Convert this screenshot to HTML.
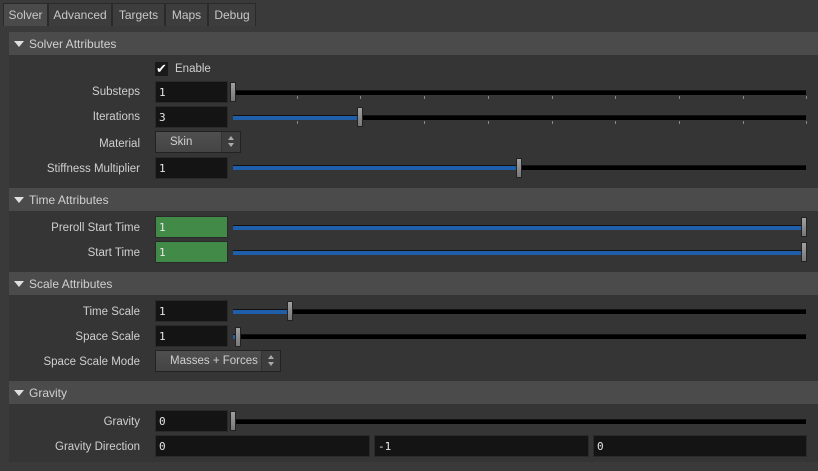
<!DOCTYPE html>
<html><head><style>
*{margin:0;padding:0;box-sizing:border-box}
body{width:818px;height:471px;background:#3a3a3a;font-family:"Liberation Sans",sans-serif;font-size:11px;color:#cfcfcf;position:relative;overflow:hidden}
.a{position:absolute}
.tab{position:absolute;top:3px;height:23px;background:#3d3d3d;border:1px solid #2a2a2a;border-bottom:none;color:#c8c8c8;font-size:12px;padding-top:4px;text-align:center}
.hdr{position:absolute;left:9px;width:809px;height:23px;background:#4b4b4b;font-size:12px;color:#d0d0d0;padding:5px 0 0 20px}
.hdr:before{content:"";position:absolute;left:5px;top:9px;border-left:5px solid transparent;border-right:5px solid transparent;border-top:6px solid #e0e0e0}
.sec{position:absolute;left:9px;width:809px;background:#353535}
.lbl{position:absolute;right:678px;font-size:11.5px;color:#cfcfcf;text-align:right;white-space:nowrap;margin-top:1px}
.fld{position:absolute;height:22px;background:#141414;border:1px solid #2a2a2a;color:#e6e6e6;font-family:"DejaVu Sans Mono","Liberation Mono",monospace;font-size:11px;padding:4px 0 0 3px}
.g{background:#428a48;border-color:#2a2a2a}
.trk{position:absolute;left:233px;width:573px;height:5px;background:#000;border-top:1px solid #111}
.fill{position:absolute;left:0;top:0;height:4px;background:#1f5ea8}
.h{position:absolute;width:6px;height:20px;background:linear-gradient(#a0a0a0,#777);border:1px solid #222}
.tk{position:absolute;width:1px;height:3px;background:#888}
.btn{position:absolute;height:22px;background:linear-gradient(#4f4f4f,#444);border:1px solid #222;color:#cfcfcf;font-size:11.5px;padding-top:4px}
.btn .s{position:absolute;right:0;top:0;width:19px;height:20px;background:#3d3d3d;border-left:1px solid #333}
</style></head><body>
<div class="tab" style="left:3px;width:45px;background:#4a4a4a">Solver</div>
<div class="tab" style="left:48px;width:64px">Advanced</div>
<div class="tab" style="left:112px;width:53px">Targets</div>
<div class="tab" style="left:165px;width:43px">Maps</div>
<div class="tab" style="left:208px;width:48px">Debug</div>

<div class="sec" style="top:32px;height:430px"></div>
<div class="hdr" style="top:32px">Solver Attributes</div>
<div class="hdr" style="top:188px">Time Attributes</div>
<div class="hdr" style="top:272px">Scale Attributes</div>
<div class="hdr" style="top:381px">Gravity</div>

<div class="a" style="left:155px;top:62px;width:13px;height:14px;background:#1a1a1a;color:#fff;font-size:13px;line-height:13px;text-align:center">✔</div>
<div class="a" style="left:175px;top:63px;font-size:11.5px">Enable</div>

<div class="lbl" style="top:85px">Substeps</div>
<div class="fld" style="left:155px;top:81px;width:73px">1</div>
<div class="trk" style="top:90px"></div>
<div class="h" style="left:230px;top:82px"></div>

<div class="lbl" style="top:110px">Iterations</div>
<div class="fld" style="left:155px;top:106px;width:73px">3</div>
<div class="trk" style="top:115px"><div class="fill" style="width:127px"></div></div>
<div class="h" style="left:357px;top:107px"></div>

<div class="lbl" style="top:137px">Material</div>
<div class="btn" style="left:155px;top:131px;width:86px;padding-left:14px">Skin<div class="s"><div class="a" style="left:6px;top:4px;border:3px solid transparent;border-bottom:4px solid #aaa;border-top:none"></div><div class="a" style="left:6px;top:11px;border:3px solid transparent;border-top:4px solid #aaa;border-bottom:none"></div></div></div>

<div class="lbl" style="top:162px">Stiffness Multiplier</div>
<div class="fld" style="left:155px;top:157px;width:73px">1</div>
<div class="trk" style="top:165px"><div class="fill" style="width:286px"></div></div>
<div class="h" style="left:516px;top:158px"></div>

<div class="lbl" style="top:221px">Preroll Start Time</div>
<div class="fld g" style="left:155px;top:216px;width:73px">1</div>
<div class="trk" style="top:225px"><div class="fill" style="width:570px"></div></div>
<div class="h" style="left:801px;top:217px"></div>

<div class="lbl" style="top:246px">Start Time</div>
<div class="fld g" style="left:155px;top:241px;width:73px">1</div>
<div class="trk" style="top:250px"><div class="fill" style="width:570px"></div></div>
<div class="h" style="left:801px;top:242px"></div>

<div class="lbl" style="top:305px">Time Scale</div>
<div class="fld" style="left:155px;top:300px;width:73px">1</div>
<div class="trk" style="top:309px"><div class="fill" style="width:57px"></div></div>
<div class="h" style="left:287px;top:301px"></div>

<div class="lbl" style="top:330px">Space Scale</div>
<div class="fld" style="left:155px;top:325px;width:73px">1</div>
<div class="trk" style="top:334px"><div class="fill" style="width:5px"></div></div>
<div class="h" style="left:235px;top:327px"></div>

<div class="lbl" style="top:355px">Space Scale Mode</div>
<div class="btn" style="left:155px;top:350px;width:126px;padding-left:14px">Masses + Forces<div class="s"><div class="a" style="left:6px;top:4px;border:3px solid transparent;border-bottom:4px solid #aaa;border-top:none"></div><div class="a" style="left:6px;top:11px;border:3px solid transparent;border-top:4px solid #aaa;border-bottom:none"></div></div></div>

<div class="lbl" style="top:415px">Gravity</div>
<div class="fld" style="left:155px;top:410px;width:73px">0</div>
<div class="trk" style="top:419px"></div>
<div class="h" style="left:230px;top:411px"></div>

<div class="lbl" style="top:440px">Gravity Direction</div>
<div class="fld" style="left:155px;top:435px;width:215px">0</div>
<div class="fld" style="left:374px;top:435px;width:215px">-1</div>
<div class="fld" style="left:593px;top:435px;width:214px">0</div>

<div id="t"></div>
<script>
var s='';for(var i=1;i<=9;i++){var x=Math.round(233+i*63.7);s+='<div class="tk" style="left:'+x+'px;top:96px"></div><div class="tk" style="left:'+x+'px;top:121px"></div>';}
document.getElementById('t').innerHTML=s;
</script>
</body></html>
